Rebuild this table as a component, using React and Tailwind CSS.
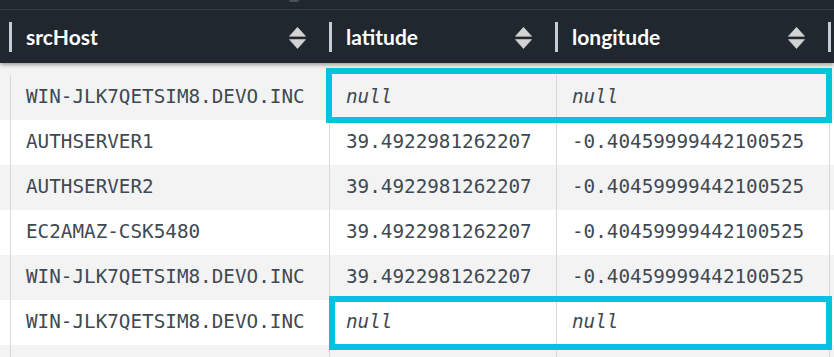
import React from "react";

const rows = [
  { host: "WIN-JLK7QETSIM8.DEVO.INC", lat: null, lon: null, grey: true, first: true },
  { host: "AUTHSERVER1", lat: "39.4922981262207", lon: "-0.40459999442100525", grey: false },
  { host: "AUTHSERVER2", lat: "39.4922981262207", lon: "-0.40459999442100525", grey: true },
  { host: "EC2AMAZ-CSK5480", lat: "39.4922981262207", lon: "-0.40459999442100525", grey: false },
  { host: "WIN-JLK7QETSIM8.DEVO.INC", lat: "39.4922981262207", lon: "-0.40459999442100525", grey: true },
  { host: "WIN-JLK7QETSIM8.DEVO.INC", lat: null, lon: null, grey: false },
  { host: "", lat: "", lon: "", grey: true },
];

function SortIcon() {
  return (
    <svg width="17" height="22" viewBox="0 0 17 22" className="mt-[2px] shrink-0">
      <path d="M8.5 0.3 L16.6 9.3 H0.4 Z" fill="#d3d3d3" stroke="#d3d3d3" strokeWidth="0.6" strokeLinejoin="round" />
      <path d="M0.4 12.6 H16.6 L8.5 21.6 Z" fill="#d3d3d3" stroke="#d3d3d3" strokeWidth="0.6" strokeLinejoin="round" />
    </svg>
  );
}

function HeadCell({ label, width }) {
  return (
    <div className={`flex h-full items-center shrink-0 ${width}`}>
      <div className="w-[3px] h-[30px] bg-[#c4cdd5] mt-[1px]" />
      <span className="ml-[14px] flex-1 text-white font-bold text-[21px] [font-family:Lato,'Noto_Sans',sans-serif]">
        {label}
      </span>
      <div className="mr-[23px]">
        <SortIcon />
      </div>
    </div>
  );
}

function Val({ v }) {
  if (v === null) return <span className="italic">null</span>;
  return <span>{v}</span>;
}

export default function App() {
  return (
    <div className="relative w-[834px] h-[357px] overflow-hidden bg-white">
      {/* top strip */}
      <div className="h-[10px] bg-[#20272e] border-b border-[#373e46] flex">
        <div className="ml-[289px] w-[10px] h-[2px] rounded-b-full bg-[#4b5259]" />
      </div>
      {/* header */}
      <div className="relative z-10 h-[53px] bg-[#20272e] flex pl-[9px] shadow-[0_2px_4px_rgba(0,0,0,0.35)]">
        <HeadCell label="srcHost" width="w-[320px]" />
        <HeadCell label="latitude" width="w-[226px]" />
        <HeadCell label="longitude" width="w-[273px]" />
        <div className="flex h-full items-center">
          <div className="w-[3px] h-[30px] bg-[#c4cdd5] mt-[1px]" />
        </div>
      </div>
      {/* body */}
      <div className="flex flex-col text-[19.3px] text-[#3f4953] [font-family:'DejaVu_Sans_Mono',monospace]">
        {rows.map((r, i) => (
          <div
            key={i}
            className={`flex ${r.first ? "h-[57px] pt-[12px]" : "h-[45px]"} ${r.grey ? "bg-[#f3f3f3]" : "bg-white"}`}
          >
            <div className="w-[10px] shrink-0" />
            <div className="w-[319px] shrink-0 border-l border-[#d9d9d9] flex items-center pl-[15px] whitespace-nowrap">
              <Val v={r.host} />
            </div>
            <div className="w-[227px] shrink-0 border-l border-[#d9d9d9] flex items-center pl-[16px] whitespace-nowrap">
              <Val v={r.lat} />
            </div>
            <div className="w-[273px] shrink-0 border-l border-[#d9d9d9] flex items-center pl-[15px] whitespace-nowrap">
              <Val v={r.lon} />
            </div>
            <div className="flex-1 border-l border-[#d9d9d9]" />
          </div>
        ))}
      </div>
      {/* highlight overlays */}
      <div className="absolute left-[326px] top-[68px] w-[506px] h-[55px] border-[6px] border-[#05c3de] z-20" />
      <div className="absolute left-[329px] top-[296px] w-[503px] h-[54px] border-[6px] border-[#05c3de] z-20" />
    </div>
  );
}
